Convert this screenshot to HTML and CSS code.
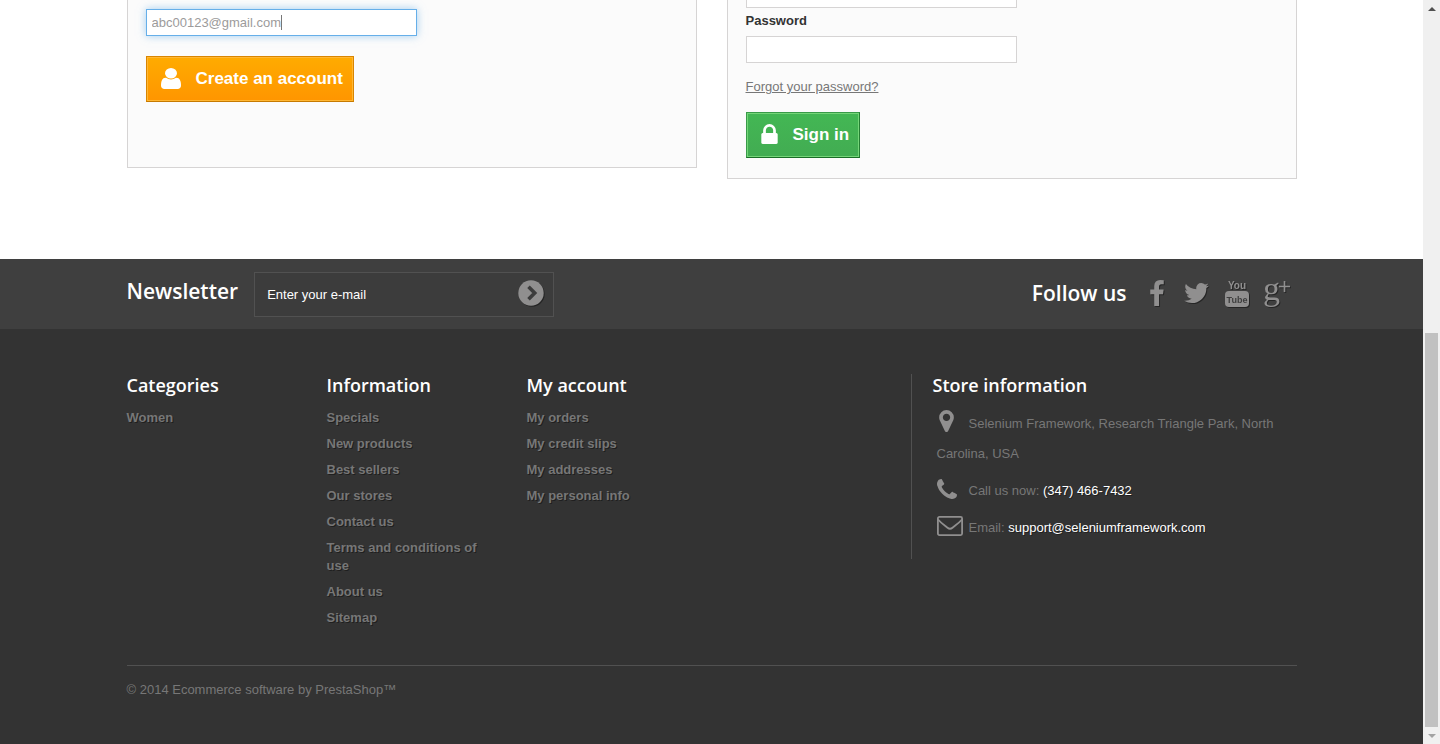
FILE: index.html
```html
<!DOCTYPE html>
<html lang="en">
<head>
<meta charset="utf-8">
<title>Login - Store</title>
<link rel="stylesheet" href="styles.css">
</head>
<body>
<div class="window">
  <div class="page">
    <main class="container forms">
      <form class="card card-create">
        <div class="field">
          <input class="input input-focus" type="text" aria-label="Email address" value="abc00123@gmail.com">
          <span class="caret"></span>
        </div>
        <button class="btn btn-create" type="button">
          <svg class="icon-user" viewBox="256 128 1280 1536" preserveAspectRatio="none"><path d="M1536 1399q0 109-62.5 187t-150.5 78h-854q-88 0-150.5-78t-62.5-187q0-85 8.5-160.5t31.5-152 58.5-131 94-89 134.5-34.5q131 128 313 128t313-128q76 0 134.5 34.5t94 89 58.5 131 31.5 152 8.5 160.5zm-256-887q0 159-112.5 271.5t-271.5 112.5-271.5-112.5-112.5-271.5 112.5-271.5 271.5-112.5 271.5 112.5 112.5 271.5z"/></svg>
          <span>Create an account</span>
        </button>
      </form>
      <form class="card card-login">
        <input class="input input-cut" type="text" aria-label="Email address">
        <label class="label" for="password">Password</label>
        <input class="input" id="password" type="password">
        <a class="forgot" href="#">Forgot your password?</a>
        <button class="btn btn-login" type="button">
          <svg class="icon-lock" viewBox="320 128 1152 1408"><path d="M640 768h512v-192q0-106-75-181t-181-75-181 75-75 181v192zm832 96v576q0 40-28 68t-68 28h-960q-40 0-68-28t-28-68v-576q0-40 28-68t68-28h32v-192q0-184 132-316t316-132 316 132 132 316v192h32q40 0 68 28t28 68z"/></svg>
          <span>Sign in</span>
        </button>
      </form>
    </main>

    <footer class="footer">
      <div class="bar">
        <div class="container bar-inner">
          <form class="newsletter">
            <label class="bar-title newsletter-title" for="newsletter">Newsletter</label>
            <div class="newsletter-box">
              <input class="newsletter-input" id="newsletter" type="text" value="Enter your e-mail">
              <button class="newsletter-go" type="button" aria-label="Subscribe">
                <svg viewBox="0 0 26 26"><circle cx="13" cy="13" r="12.7" fill="#908f8f"/><path d="M10.5 6.8l6.2 6.2-6.2 6.2" fill="none" stroke="#3c3c3c" stroke-width="3.6"/></svg>
              </button>
            </div>
          </form>
          <div class="social">
            <h4 class="bar-title">Follow us</h4>
            <ul class="social-list">
              <li><a href="#" aria-label="Facebook"><svg class="icon-fb" viewBox="479 0 864 1664"><path d="M1343 12v264h-157q-86 0-116 36t-30 108v189h293l-39 296h-254v759h-306v-759h-255v-296h255v-218q0-186 104-288.5t277-102.5q147 0 228 12z"/></svg></a></li>
              <li><a href="#" aria-label="Twitter"><svg class="icon-tw" viewBox="108 256 1576 1280"><path d="M1684 408q-67 98-162 167 1 14 1 42 0 130-38 259.5t-115.5 248.5-184.5 210.5-258 146-323 54.5q-271 0-496-145 35 4 78 4 225 0 401-138-105-2-188-64.5t-114-159.5q33 5 61 5 43 0 85-11-112-23-185.5-111.5t-73.5-205.5v-4q68 38 146 41-66-44-105-115t-39-154q0-88 44-163 121 149 294.5 238.5t371.5 99.5q-8-38-8-74 0-134 94.5-228.5t228.5-94.5q140 0 236 102 109-21 205-78-37 115-142 178 93-10 186-50z"/></svg></a></li>
              <li><a href="#" aria-label="YouTube"><svg class="icon-yt" viewBox="0 0 24 28"><text class="yt-you" x="12" y="10" text-anchor="middle">You</text><rect x="0" y="12" width="24" height="16" rx="4"/><text class="yt-tube" x="12" y="24" text-anchor="middle">Tube</text></svg></a></li>
              <li><a href="#" aria-label="Google Plus"><svg class="icon-gp" viewBox="0 0 28 28"><text class="gp-g" x="0" y="21">g</text><path d="M20.700 2h1.600v4.700h4.700v1.600h-4.700v4.700h-1.600v-4.700h-4.700v-1.600h4.700z"/></svg></a></li>
            </ul>
          </div>
        </div>
      </div>

      <div class="container columns">
        <section class="column">
          <h4 class="heading">Categories</h4>
          <ul class="links"><li><a href="#">Women</a></li></ul>
        </section>
        <section class="column">
          <h4 class="heading">Information</h4>
          <ul class="links">
            <li><a href="#">Specials</a></li>
            <li><a href="#">New products</a></li>
            <li><a href="#">Best sellers</a></li>
            <li><a href="#">Our stores</a></li>
            <li><a href="#">Contact us</a></li>
            <li><a href="#">Terms and conditions of use</a></li>
            <li><a href="#">About us</a></li>
            <li><a href="#">Sitemap</a></li>
          </ul>
        </section>
        <section class="column">
          <h4 class="heading">My account</h4>
          <ul class="links">
            <li><a href="#">My orders</a></li>
            <li><a href="#">My credit slips</a></li>
            <li><a href="#">My addresses</a></li>
            <li><a href="#">My personal info</a></li>
          </ul>
        </section>
        <section class="store">
          <h4 class="heading">Store information</h4>
          <ul class="store-list">
            <li><span class="store-icon"><svg class="icon-pin" viewBox="384 128 1024 1536"><path d="M1152 640q0-106-75-181t-181-75-181 75-75 181 75 181 181 75 181-75 75-181zm256 0q0 109-33 179l-364 774q-16 33-47.5 52t-67.5 19-67.5-19-46.5-52l-365-774q-33-70-33-179 0-212 150-362t362-150 362 150 150 362z"/></svg></span>Selenium Framework, Research Triangle Park, North Carolina, USA</li>
            <li><span class="store-icon"><svg class="icon-phone" viewBox="192 128 1408 1408"><path d="M1600 1240q0 27-10 70.500t-21 68.500q-21 50-122 106-94 51-186 51-27 0-52.500-3.500t-57.500-12.500-47.500-14.500-55.500-20.500-49-18q-98-35-175-83-128-79-264.500-215.500t-215.500-264.500q-48-77-83-175-3-9-18-49t-20.500-55.500-14.500-47.500-12.500-57.500-3.500-52.500q0-92 51-186 56-101 106-122 25-11 68.500-21t70.500-10q14 0 21 3 18 6 53 76 11 19 30 54t35 63.500 31 53.500q3 4 17.500 25t21.500 35.500 7 28.500q0 20-28.500 50t-62 55-62 53-28.500 46q0 9 5 22.500t8.500 20.500 14 24 11.500 19q76 137 174 235t235 174q2 1 19 11.500t24 14 20.500 8.500 22.500 5q18 0 46-28.500t53-62 55-62 50-28.500q14 0 28.500 7t35.500 21.500 25 17.500q25 15 53.500 31t63.500 35 54 30q70 35 76 53 3 7 3 21z"/></svg></span>Call us now: <span class="strong">(347) 466-7432</span></li>
            <li><span class="store-icon"><svg class="icon-mail" viewBox="0 0 26 20"><g fill="none" stroke="#908f8f" stroke-width="1.800"><rect x="0.900" y="0.900" width="24.200" height="18.200" rx="1.500"/><path d="M1 3.500c3 3.500 6.500 5.800 9.500 8.200 1.800 1.500 3.200 1.500 5 0 3-2.400 6.500-4.700 9.500-8.200"/></g></svg></span>Email: <a class="strong" href="#">support@seleniumframework.com</a></li>
          </ul>
        </section>
      </div>

      <div class="container"><p class="copyright">© 2014 Ecommerce software by PrestaShop™</p></div>
    </footer>
  </div>

  <div class="scrollbar" aria-hidden="true">
    <span class="arrow arrow-up"></span>
    <span class="track-before"></span>
    <span class="thumb"></span>
    <span class="arrow arrow-down"></span>
  </div>
</div>
</body>
</html>
```
FILE: styles.css
```css
* { box-sizing: border-box; }
body { margin: 0; background: #fff; color: #777; font: 13px/18px "Liberation Sans", Arial, sans-serif; }
ul { margin: 0; padding: 0; list-style: none; }
h4, p { margin: 0; }
a { color: inherit; text-decoration: none; }
svg { display: block; overflow: visible; }

.window { display: flex; min-height: 100vh; }
.page { flex: 1; min-width: 0; display: flex; flex-direction: column; }
.container { width: 100%; max-width: 1170px; margin: 0 auto; }

.forms { display: grid; grid-template-columns: 1fr 1fr; gap: 30px; align-items: start; padding-bottom: 80px; }
.card { display: flex; flex-direction: column; align-items: flex-start; background: #fbfbfb; border: 1px solid #d6d4d4; border-top: 0; }
.card-create { padding: 9px 18px 65px; }
.card-login { padding: 0 18px 20px; }
.field { position: relative; margin-bottom: 20px; }
.input { display: block; width: 271px; height: 27px; padding: 3px 5px; background: #fff; border: 1px solid #d6d4d4; color: #9c9b9b; font: inherit; }
.input-focus { border-color: #66afe9; box-shadow: 0 0 8px rgba(102, 175, 233, 0.6); outline: 0; }
.caret { position: absolute; left: 135px; top: 6px; width: 1px; height: 15px; background: #777; }
.input-cut { height: 8px; padding: 0; border-top: 0; }
.label { margin: 4px 0 6px; color: #333; font-weight: bold; }
.forgot { margin: 15px 0 16px; text-decoration: underline; }

.btn { display: flex; align-items: center; gap: 15px; height: 46px; padding: 0 10px 0 14px; border: 1px solid; color: #fff; font: bold 17px/22px "Liberation Sans", Arial, sans-serif; }
.btn svg { fill: #fff; margin-bottom: 2px; }
.btn-create { background: linear-gradient(#ffab00, #ff9500); border-color: #d98500 #d98500 #c67a00; box-shadow: inset 0 0 0 1px #ffb734; }
.btn-login { background: linear-gradient(#43b754, #42ac52); border-color: #399a49 #247f32 #1a6d27 #399a49; box-shadow: inset 0 0 0 1px #74d578; }
.icon-user { width: 20px; height: 21px; }
.btn .icon-lock { width: 17px; height: 20px; margin-bottom: 3px; }

.footer { flex: 1; background: #333; }
.bar { background: #3f3f3f; }
.bar-inner { display: flex; justify-content: space-between; align-items: center; height: 70px; }
.bar-title { color: #fff; font: 600 21px/25px "Open Sans", sans-serif; }
.newsletter { display: flex; align-items: center; gap: 16px; }
.newsletter-title { padding-bottom: 5px; }
.newsletter-box { display: flex; align-items: center; width: 300px; height: 45px; background: #3c3c3c; border: 1px solid #515151; }
.newsletter-input { flex: 1; min-width: 0; height: 43px; padding: 0 12px; background: none; border: 0; color: #fff; font: inherit; }
.newsletter-go { padding: 0; margin: 0 9px 2px 0; background: none; border: 0; }
.newsletter-go svg { width: 26px; height: 26px; filter: drop-shadow(1px 1px 0 rgba(0, 0, 0, 0.4)); }
.social { display: flex; align-items: center; gap: 10px; padding-bottom: 2px; }
.social-list { display: flex; }
.social-list a { display: flex; align-items: center; justify-content: center; width: 40px; height: 28px; }
.social-list svg { fill: #908f8f; filter: drop-shadow(1px 1px 0 rgba(0, 0, 0, 0.4)); }
.icon-fb { width: 14px; height: 26px; }
.icon-tw { width: 25px; height: 20px; }
.icon-yt { width: 24px; height: 28px; }
.icon-gp { width: 28px; height: 28px; }
.yt-you, .yt-tube { font: bold 9px "Liberation Sans", Arial, sans-serif; }
.social-list .yt-you { font-size: 10px; }
.social-list .yt-tube { fill: #3f3f3f; }
.gp-g { font: 34px "Liberation Serif", serif; }

.columns { display: grid; grid-template-columns: 200px 200px 200px 386px; justify-content: start; padding: 45px 0 30px; }
.store { margin-left: 184px; width: 386px; padding: 0 20px 16px 21px; border-left: 1px solid #515151; align-self: start; }
.column { padding-right: 30px; }
.heading { margin-bottom: 13px; color: #fff; font: 600 18px/22px "Open Sans", sans-serif; }
.links li { margin-bottom: 8px; font-weight: bold; text-shadow: 1px 1px 0 rgba(0, 0, 0, 0.4); }
.store-list { padding-left: 4px; line-height: 30px; }
.store-list li + li { margin-top: 7px; }
.store-icon { display: inline-flex; width: 32px; vertical-align: -4px; }
.store-icon svg { fill: #908f8f; }
.icon-pin { width: 15px; height: 22px; margin-left: 2px; }
.icon-phone { width: 20px; height: 20px; margin-bottom: 2px; }
.icon-mail { width: 26px; height: 20px; }
.strong { color: #fff; text-shadow: 1px 1px 0 rgba(0, 0, 0, 0.4); }
.copyright { padding: 15px 0 45px; border-top: 1px solid #515151; }

.scrollbar { width: 17px; display: flex; flex-direction: column; background: #f0f0f0; }
.arrow { display: flex; justify-content: center; align-items: center; height: 17px; }
.arrow::before { content: ""; border: 4px solid transparent; }
.arrow-up::before { border-top: 0; border-bottom-color: #505050; }
.arrow-down::before { border-bottom: 0; border-top-color: #a3a3a3; }
.track-before { flex: 316; }
.thumb { flex: 394; margin: 0 2px; background: #c1c1c1; }
```
